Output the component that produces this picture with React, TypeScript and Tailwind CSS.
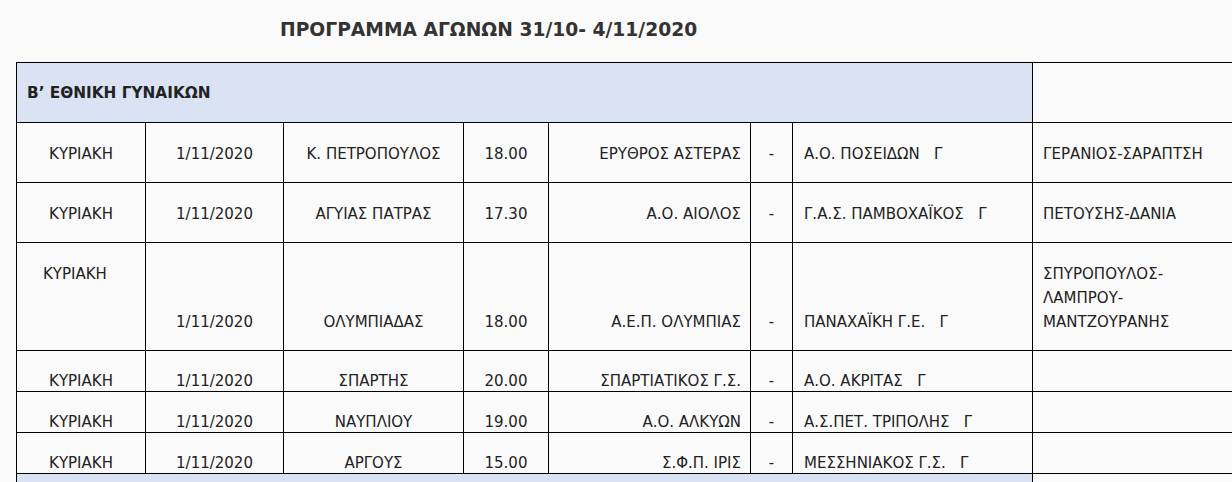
const rows = [
  { day: 'ΚΥΡΙΑΚΗ', date: '1/11/2020', venue: 'Κ. ΠΕΤΡΟΠΟΥΛΟΣ', time: '18.00', home: 'ΕΡΥΘΡΟΣ ΑΣΤΕΡΑΣ', away: 'Α.Ο. ΠΟΣΕΙΔΩΝ   Γ', refs: ['ΓΕΡΑΝΙΟΣ-ΣΑΡΑΠΤΣΗ'], tall: false, short: false },
  { day: 'ΚΥΡΙΑΚΗ', date: '1/11/2020', venue: 'ΑΓΥΙΑΣ ΠΑΤΡΑΣ', time: '17.30', home: 'Α.Ο. ΑΙΟΛΟΣ', away: 'Γ.Α.Σ. ΠΑΜΒΟΧΑΪΚΟΣ   Γ', refs: ['ΠΕΤΟΥΣΗΣ-ΔΑΝΙΑ'], tall: false, short: false },
  { day: 'ΚΥΡΙΑΚΗ', date: '1/11/2020', venue: 'ΟΛΥΜΠΙΑΔΑΣ', time: '18.00', home: 'Α.Ε.Π. ΟΛΥΜΠΙΑΣ', away: 'ΠΑΝΑΧΑΪΚΗ Γ.Ε.   Γ', refs: ['ΣΠΥΡΟΠΟΥΛΟΣ-', 'ΛΑΜΠΡΟΥ-', 'ΜΑΝΤΖΟΥΡΑΝΗΣ'], tall: true, short: false },
  { day: 'ΚΥΡΙΑΚΗ', date: '1/11/2020', venue: 'ΣΠΑΡΤΗΣ', time: '20.00', home: 'ΣΠΑΡΤΙΑΤΙΚΟΣ Γ.Σ.', away: 'Α.Ο. ΑΚΡΙΤΑΣ   Γ', refs: [], tall: false, short: true },
  { day: 'ΚΥΡΙΑΚΗ', date: '1/11/2020', venue: 'ΝΑΥΠΛΙΟΥ', time: '19.00', home: 'Α.Ο. ΑΛΚΥΩΝ', away: 'Α.Σ.ΠΕΤ. ΤΡΙΠΟΛΗΣ   Γ', refs: [], tall: false, short: true },
  { day: 'ΚΥΡΙΑΚΗ', date: '1/11/2020', venue: 'ΑΡΓΟΥΣ', time: '15.00', home: 'Σ.Φ.Π. ΙΡΙΣ', away: 'ΜΕΣΣΗΝΙΑΚΟΣ Γ.Σ.   Γ', refs: [], tall: false, short: true },
];

function Section({ title }: { title: string }) {
  return (
    <tr>
      <td colSpan={7} className="h-[60px] border border-black bg-[#dae3f3] pl-[10px] align-middle text-[15.3px] font-bold">
        {title}
      </td>
      <td className="border border-black"></td>
    </tr>
  );
}

export default function App() {
  return (
    <div
      className="h-[482px] w-full overflow-hidden bg-[#fafafa] text-[15px] leading-[24px] text-[#222]"
      style={{ fontFamily: '"DejaVu Sans", Verdana, sans-serif' }}
    >
      <div className="flex h-[62px] items-center pl-[280px] pb-[2px]">
        <h1 className="text-[18.7px] font-bold text-[#333]">ΠΡΟΓΡΑΜΜΑ ΑΓΩΝΩΝ 31/10- 4/11/2020</h1>
      </div>

      <div className="pl-4">
        <table className="w-[1266px] table-fixed border-collapse">
          <colgroup>
            <col className="w-[129px]" />
            <col className="w-[138px]" />
            <col className="w-[180px]" />
            <col className="w-[85px]" />
            <col className="w-[202px]" />
            <col className="w-[42px]" />
            <col className="w-[240px]" />
            <col className="w-[250px]" />
          </colgroup>
          <tbody>
            <Section title="Β’ ΕΘΝΙΚΗ ΓΥΝΑΙΚΩΝ" />
            {rows.map((r, i) => {
              const h = r.tall
                ? 'h-[108px] pb-[16px]'
                : r.short
                  ? 'h-[41px] pb-0 leading-[20px]'
                  : 'h-[60px] pb-[16px]';
              const cell = `border border-black align-bottom whitespace-pre ${h}`;
              return (
                <tr key={i}>
                  {r.tall ? (
                    <td className="h-[108px] border border-black pl-[26px] pt-[19px] text-left align-top">{r.day}</td>
                  ) : (
                    <td className={`${cell} text-center`}>{r.day}</td>
                  )}
                  <td className={`${cell} text-center`}>{r.date}</td>
                  <td className={`${cell} text-center`}>{r.venue}</td>
                  <td className={`${cell} text-center`}>{r.time}</td>
                  <td className={`${cell} pr-[9px] text-right`}>{r.home}</td>
                  <td className={`${cell} text-center`}>-</td>
                  <td className={`${cell} pl-[11px] text-left`}>{r.away}</td>
                  <td className={`${cell} pl-[10px] text-left`}>
                    {r.refs.map((x, j) => (
                      <div key={j}>{x}</div>
                    ))}
                  </td>
                </tr>
              );
            })}
            <Section title="" />
          </tbody>
        </table>
      </div>
    </div>
  );
}
